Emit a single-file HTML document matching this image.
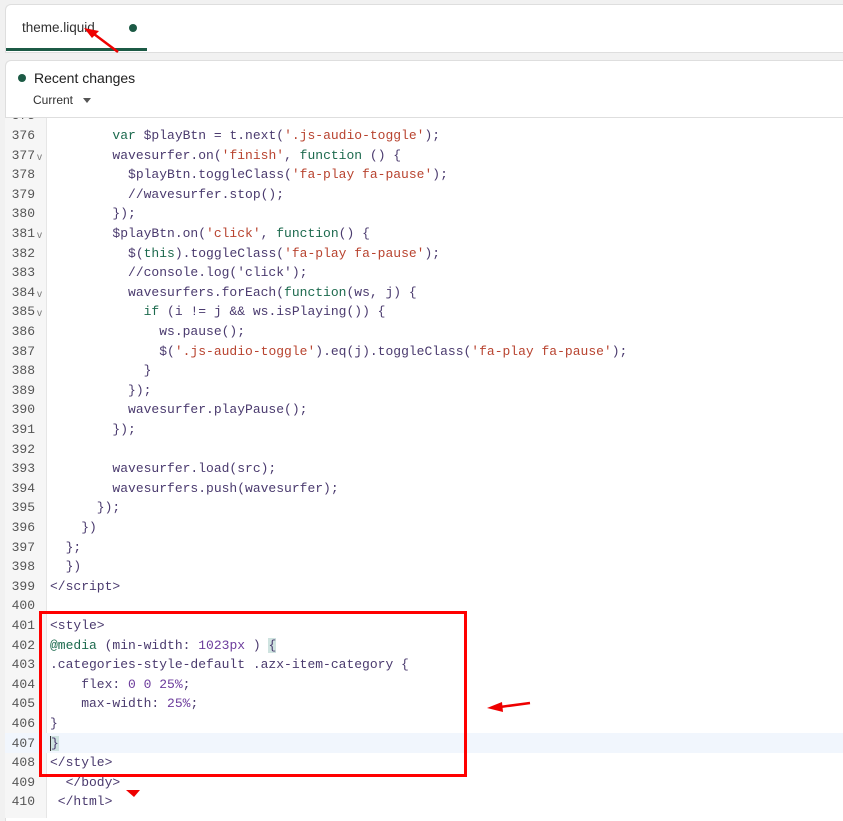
<!DOCTYPE html>
<html><head><meta charset="utf-8"><style>
body{margin:0;width:843px;height:814px;background:#f1f1f1;position:relative;overflow:hidden;font-family:"Liberation Sans",sans-serif}
.tabbar{position:absolute;left:5px;top:4px;width:838px;height:47px;background:#fff;border-top:1px solid #dedede;border-bottom:1px solid #dedede;border-left:1px solid #dedede;border-top-left-radius:6px}
.tab{position:absolute;left:0;top:0;width:141px;height:46px;border-bottom:3px solid #1c5a45;box-sizing:border-box}
.tab span{position:absolute;left:16px;top:15px;font-size:13.5px;color:#303030}
.dot{position:absolute;width:8px;height:8px;border-radius:50%;background:#1c5a45}
.panel{position:absolute;left:5px;top:60px;width:838px;height:760px;background:#fff;border-left:1px solid #dedede;border-top:1px solid #dedede;border-top-left-radius:6px}
.hdr{position:absolute;left:0;top:0;width:838px;height:56px;border-bottom:1px solid #dedede}
.area{position:absolute;left:0;top:118px;width:843px;height:700px;overflow:hidden}
.gutter{position:absolute;left:5px;top:0;width:41px;height:700px;background:#f6f6f6;border-right:1px solid #e6e6e6}
.ln{position:absolute;left:5px;width:30px;text-align:right;font:13px/19.6px "Liberation Mono",monospace;color:#555}
.fold{position:absolute;left:37px;font:10px "Liberation Sans",sans-serif;color:#777}
.code{position:absolute;left:50px;font:13px/19.6px "Liberation Mono",monospace;color:#4a3a6e;white-space:pre}
.k{color:#1d6a4e}.s{color:#b8432f}.n{color:#6c3c9c}.at{color:#1d6a4e}
</style></head><body>
<div class="tabbar"><div class="tab"><span>theme.liquid</span></div><div class="dot" style="left:123px;top:19px"></div></div>
<div class="panel"><div class="hdr">
<div class="dot" style="left:12px;top:13px"></div>
<div style="position:absolute;left:28px;top:9px;font-size:14px;color:#202020">Recent changes</div>
<div style="position:absolute;left:27px;top:32px;font-size:12px;color:#303030">Current</div>
<div style="position:absolute;left:77px;top:37px;width:0;height:0;border-left:4px solid transparent;border-right:4px solid transparent;border-top:5px solid #555"></div>
</div></div>
<div class="area">
<div class="gutter"></div>
<div style="position:absolute;left:5px;top:615px;width:838px;height:20px;background:#f1f6fd"></div>
<div id="c"></div>
</div>
<script>
var L=[
[375,''],
[376,'        <span class="k">var</span> $playBtn = t.next(<span class="s">\'.js-audio-toggle\'</span>);'],
[377,'        wavesurfer.on(<span class="s">\'finish\'</span>, <span class="k">function</span> () {',1],
[378,'          $playBtn.toggleClass(<span class="s">\'fa-play fa-pause\'</span>);'],
[379,'          //wavesurfer.stop();'],
[380,'        });'],
[381,'        $playBtn.on(<span class="s">\'click\'</span>, <span class="k">function</span>() {',1],
[382,'          $(<span class="k">this</span>).toggleClass(<span class="s">\'fa-play fa-pause\'</span>);'],
[383,'          //console.log(\'click\');'],
[384,'          wavesurfers.forEach(<span class="k">function</span>(ws, j) {',1],
[385,'            <span class="k">if</span> (i != j &amp;&amp; ws.isPlaying()) {',1],
[386,'              ws.pause();'],
[387,'              $(<span class="s">\'.js-audio-toggle\'</span>).eq(j).toggleClass(<span class="s">\'fa-play fa-pause\'</span>);'],
[388,'            }'],
[389,'          });'],
[390,'          wavesurfer.playPause();'],
[391,'        });'],
[392,''],
[393,'        wavesurfer.load(src);'],
[394,'        wavesurfers.push(wavesurfer);'],
[395,'      });'],
[396,'    })'],
[397,'  };'],
[398,'  })'],
[399,'&lt;/script&gt;'],
[400,''],
[401,'&lt;style&gt;',2],
[402,'<span class="at">@media</span> (min-width: <span class="n">1023px</span> ) <span style="background:#cfe3e0">{</span>',2],
[403,'.categories-style-default .azx-item-category {',2],
[404,'    flex: <span class="n">0 0 25%</span>;'],
[405,'    max-width: <span class="n">25%</span>;'],
[406,'}'],
[407,'<span style="background:#cfe3e0;border-left:1px solid #333">}</span>'],
[408,'&lt;/style&gt;'],
[409,'  &lt;/body&gt;'],
[410,' &lt;/html&gt;']];
var h='';
L.forEach(function(l){var t=8+(l[0]-376)*19.6;
h+='<div class="ln" style="top:'+t+'px">'+l[0]+'</div>';
if(l[2]==1)h+='<div class="fold" style="top:'+(t+6)+'px">v</div>';
if(l[2]==2)h+='<div class="fold" style="top:'+(t+4)+'px;left:39px">,</div>';
h+='<div class="code" style="top:'+t+'px">'+l[1]+'</div>';});
document.getElementById('c').innerHTML=h;
</script>
<div style="position:absolute;left:39px;top:611px;width:422px;height:160px;border:3px solid #f00"></div>
<svg width="843" height="814" style="position:absolute;left:0;top:0">
<line x1="118" y1="52" x2="94" y2="34" stroke="#e00" stroke-width="2.5"/>
<polygon points="84,28 99,31 92,38" fill="#e00"/>
<line x1="530" y1="703" x2="500" y2="707" stroke="#e00" stroke-width="2.5"/>
<polygon points="487,708 502,702 503,712" fill="#e00"/>
<polygon points="126,790 140,790 134,797" fill="#e00"/>
</svg>
</body></html>
